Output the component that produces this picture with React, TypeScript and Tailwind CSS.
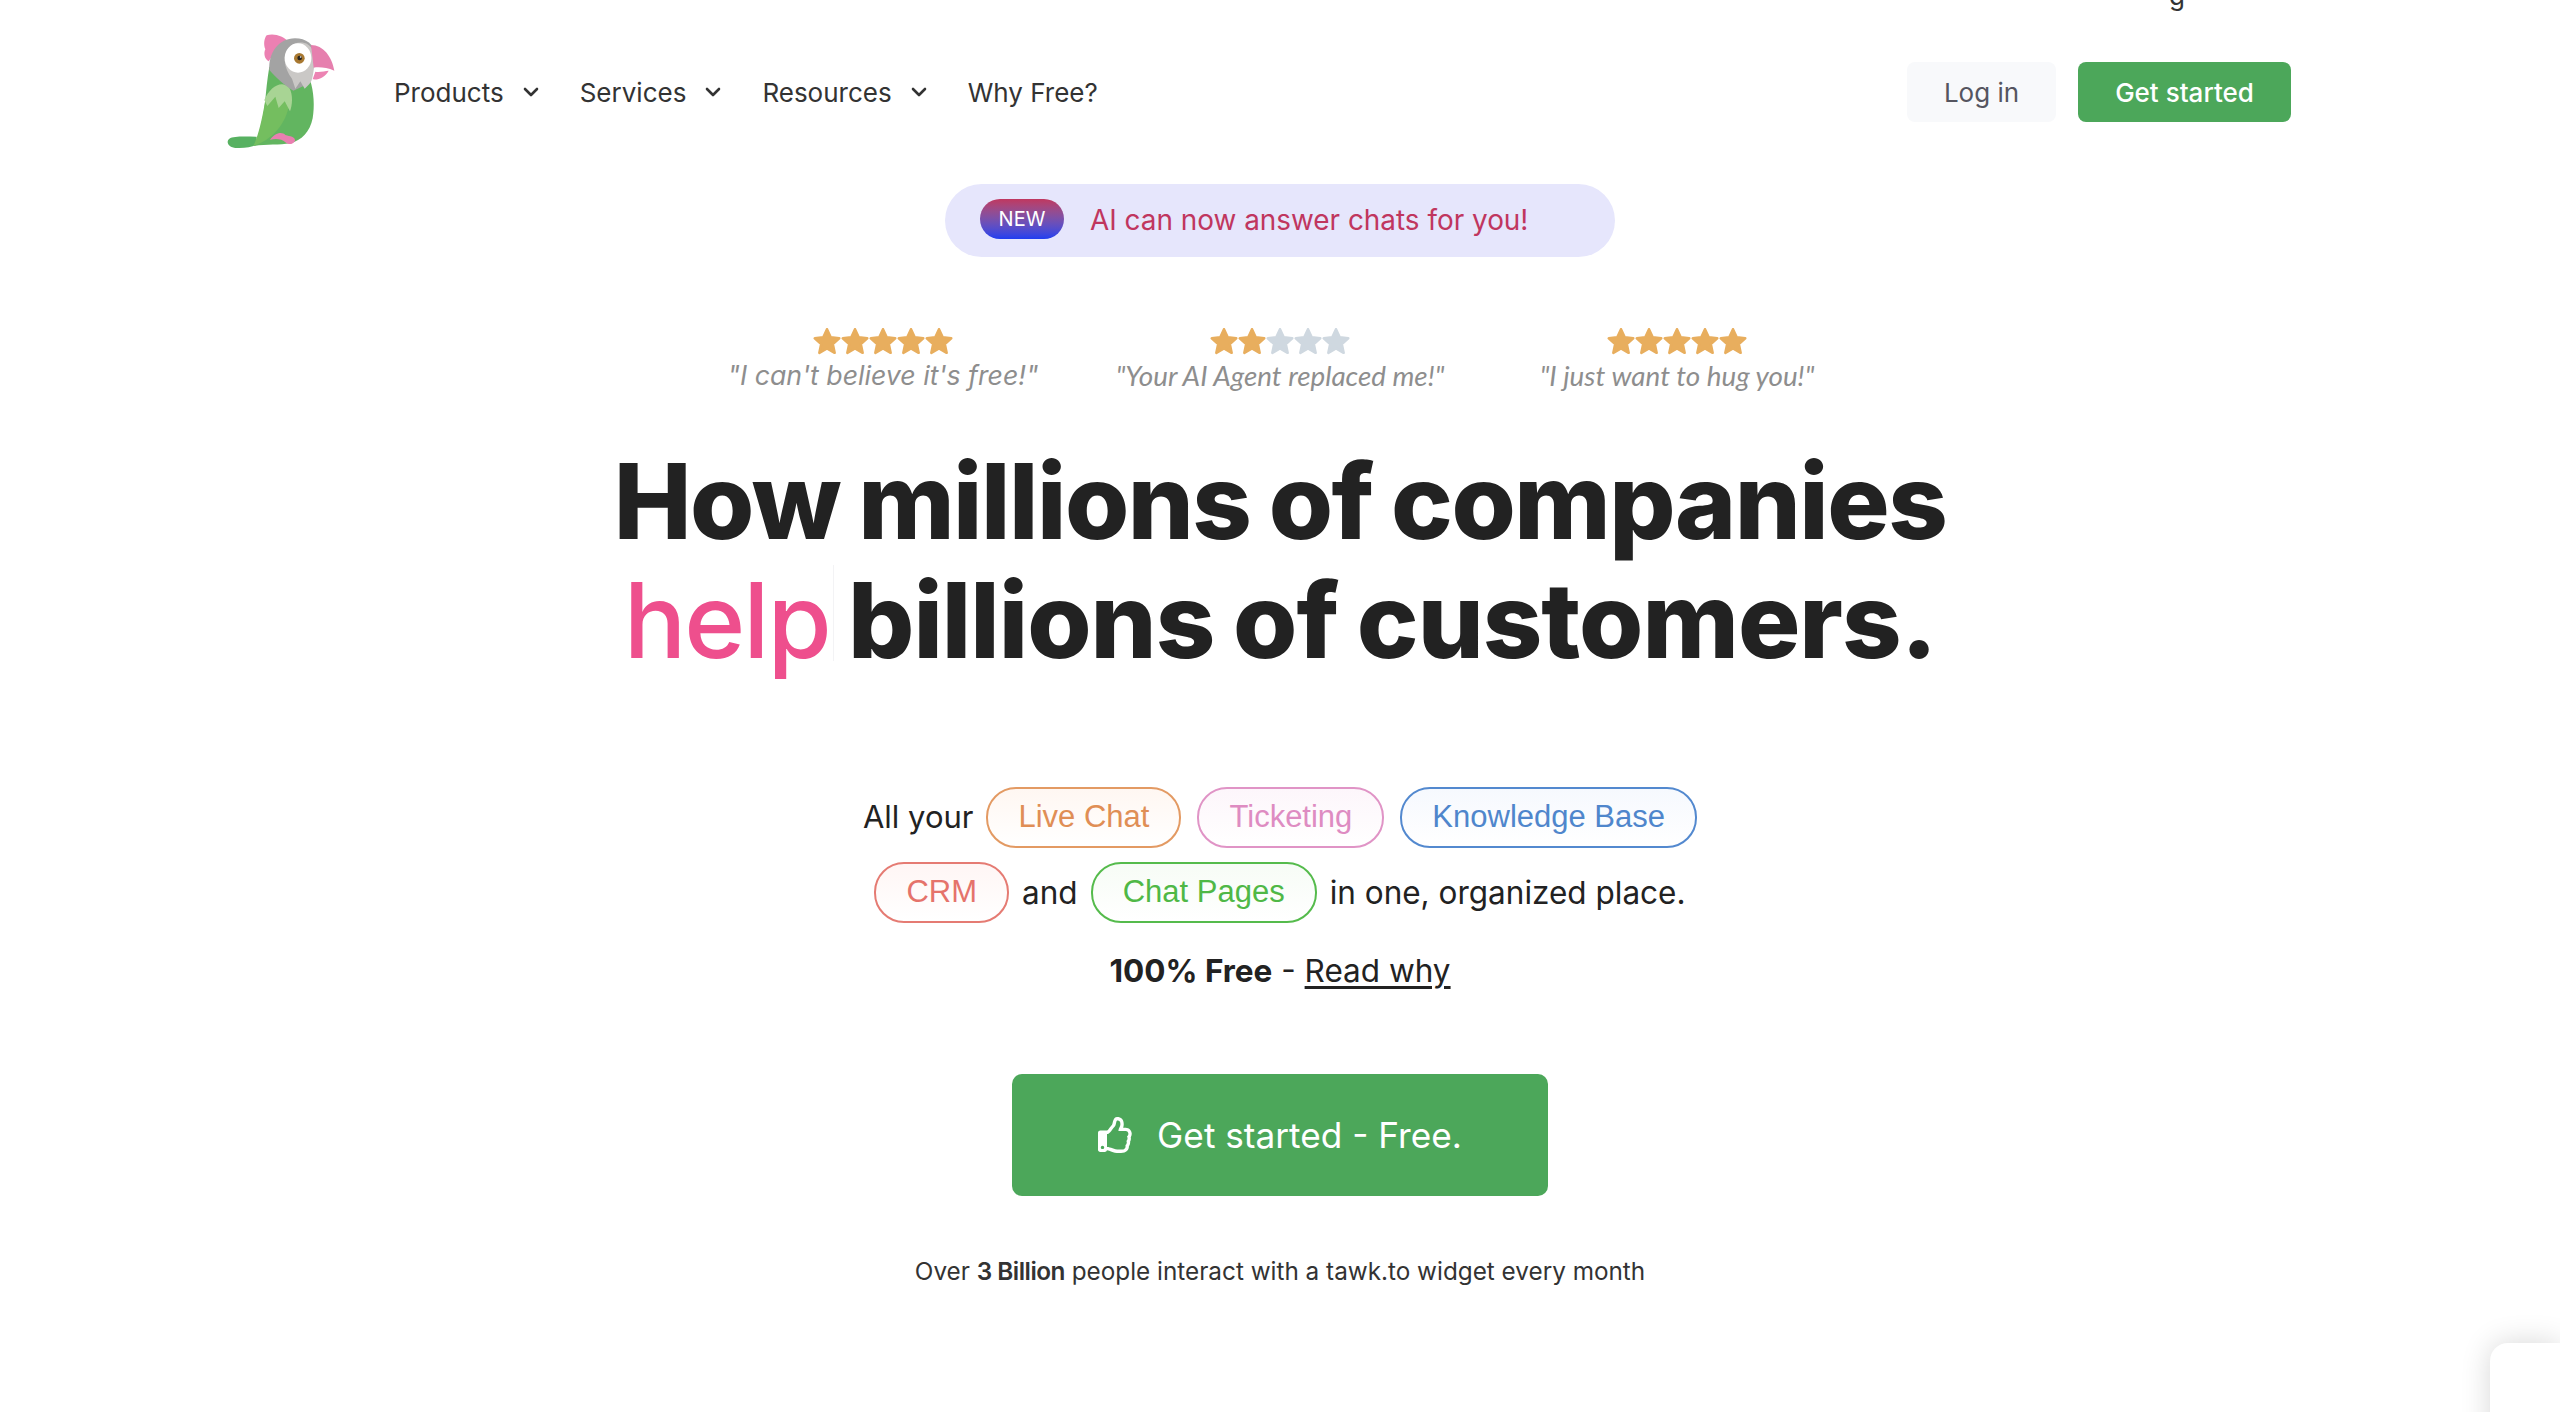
import { ChevronDown } from 'lucide-react';
import { FaRegThumbsUp } from 'react-icons/fa';

const navLinks = [
  { label: 'Products', menu: true },
  { label: 'Services', menu: true },
  { label: 'Resources', menu: true },
  { label: 'Why Free?', menu: false },
];

const reviews = [
  { quote: `"I can't believe it's free!"`, stars: 5, font: "font-['Inter',sans-serif] text-[26.7px] mt-px" },
  { quote: `"Your AI Agent replaced me!"`, stars: 2, font: "font-['Lato',sans-serif] text-[27.8px] mt-0.5" },
  { quote: `"I just want to hug you!"`, stars: 5, font: "font-['Lato',sans-serif] text-[27.8px] mt-0.5" },
];

function Parrot() {
  return (
    <svg viewBox="0 0 390 420" className="w-[130px] h-[140px] shrink-0">
      {/* crest */}
      <path d="M170 46C190 38 222 48 234 64L200 90L176 124C164 118 160 100 166 88C160 74 162 56 170 46Z" fill="#EC80B2" />
      {/* tail */}
      <path d="M140 350C110 350 72 347 58 356C46 366 56 384 82 384C106 385 126 380 140 374Z" fill="#57B161" />
      {/* body */}
      <path d="M178 140L300 180C312 215 314 260 308 295C300 335 275 362 240 370C210 376 170 372 132 378C150 340 160 290 165 250C168 215 172 175 178 140Z" fill="#62B560" />
      <path d="M165 245C156 300 144 350 130 378C180 362 222 322 236 262L210 225Z" fill="#74BE5F" />
      <path d="M163 240C180 200 216 178 238 204C250 224 247 258 240 274L224 244L206 264L196 230L172 258Z" fill="#A8D494" />
      {/* head */}
      <path d="M178 150C174 100 206 55 255 55C288 55 312 72 318 108L298 190L250 212C222 195 195 170 178 150Z" fill="#A3A3A3" />
      <path d="M224 122C222 86 250 64 280 68C306 72 318 100 313 136C309 168 306 188 296 194L284 206L271 184L256 206L246 176C234 160 226 142 224 122Z" fill="#CAC8C6" />
      <ellipse cx="264" cy="114" rx="40" ry="44" fill="#FFFFFF" />
      <circle cx="268" cy="115" r="16" fill="#A87830" />
      <circle cx="269" cy="114" r="7" fill="#26231F" />
      <circle cx="272" cy="111" r="2.5" fill="#FFFFFF" />
      {/* beak */}
      <path d="M303 75C340 75 366 110 373 152C350 142 326 140 311 143Z" fill="#E67FAE" />
      <path d="M316 155C330 158 345 152 356 152C346 170 326 181 308 178Z" fill="#EC84B3" />
      {/* foot */}
      <path d="M180 360C194 338 216 334 226 345C240 349 256 350 255 362C250 373 236 375 228 368C215 356 195 355 180 360Z" fill="#E97FB0" />
    </svg>
  );
}

function Star({ on }: { on: boolean }) {
  return (
    <svg viewBox="1 1.5 22 22" className="w-7 h-7">
      <path
        d="M12 2.5l2.9 6.3 6.7.8-5 4.6 1.4 6.8-6-3.5-6 3.5 1.4-6.8-5-4.6 6.7-.8z"
        fill={on ? '#E8AE5E' : '#CFD8E0'}
        stroke={on ? '#E8AE5E' : '#CFD8E0'}
        strokeWidth="2"
        strokeLinejoin="round"
      />
    </svg>
  );
}

function Pill({ label, className }: { label: string; className: string }) {
  return (
    <span
      className={`inline-flex items-center h-[61px] px-[30px] rounded-[30px] border-2 bg-gradient-to-b to-white font-['Liberation_Sans',sans-serif] text-[31px] ${className}`}
    >
      {label}
    </span>
  );
}

export default function App() {
  return (
    <div className="relative w-full h-[1412px] overflow-hidden bg-white text-[#222222] font-['Inter',sans-serif]">
      <span className="absolute right-[375px] top-[-24px] text-[26px] text-[#333]">g</span>

      {/* Nav */}
      <header className="flex items-center pl-[210px] pr-[269px] pt-5">
        <Parrot />
        <nav className="flex items-center gap-[37px] ml-[54px] mt-1 text-[26px] text-[#333333]">
          {navLinks.map((link) => (
            <a key={link.label} className="flex items-center gap-[15px]">
              {link.label}
              {link.menu && <ChevronDown size={24} strokeWidth={2.6} />}
            </a>
          ))}
        </nav>
        <div className="flex items-center gap-[22px] ml-auto mt-1 text-[26px]">
          <button className="w-[149px] h-[60px] rounded-lg bg-[#F8F9FB] text-[#555560]">Log in</button>
          <button className="w-[213px] h-[60px] rounded-lg bg-[#4CA75A] text-white font-medium">Get started</button>
        </div>
      </header>

      {/* Hero */}
      <main className="flex flex-col items-center">
        <div className="flex items-center w-[670px] h-[73px] mt-6 pl-[35px] rounded-[37px] bg-[#E6E6FC]">
          <span className="flex items-center justify-center w-[84px] h-10 -mt-[3px] rounded-[20px] bg-gradient-to-b from-[#C0365F] to-[#1F3DF0] text-white text-[20px]">
            NEW
          </span>
          <span className="ml-[26px] text-[27.9px] text-[#C0365F]">AI can now answer chats for you!</span>
        </div>

        <div className="grid grid-cols-3 w-[1191px] mt-[71px]">
          {reviews.map((review) => (
            <div key={review.quote} className="flex flex-col items-center">
              <div className="flex">
                {[0, 1, 2, 3, 4].map((i) => (
                  <Star key={i} on={i < review.stars} />
                ))}
              </div>
              <p className={`italic leading-[36px] text-[#8E8E8E] ${review.font}`}>{review.quote}</p>
            </div>
          ))}
        </div>

        <h1 className="mt-[48px] text-center text-[104px] leading-[119px] font-extrabold tracking-[-1.5px] [word-spacing:-3px] text-[#222222]">
          How millions of companies
          <br />
          <span className="relative font-medium text-[#EE4F8D] tracking-[-2px]">
            help
            <span className="absolute right-[-4px] top-[8px] h-[96px] w-px bg-[#F3F3F5]" />
          </span>{' '}
          <span className="tracking-[-1px]">billions of customers.</span>
        </h1>

        <div className="flex flex-col items-center gap-[14px] mt-[107px] text-[31.5px] text-[#222222]">
          <div className="flex items-center gap-[13px]">
            <span className="text-[31px]">All your</span>
            <Pill label="Live Chat" className="from-[#FFF7F2] border-[#E39A63] text-[#E08E55]" />
            <Pill label="Ticketing" className="from-[#FDF6FB] border-[#E094C6] text-[#DE8CC2] ml-[3px]" />
            <Pill label="Knowledge Base" className="from-[#F6F9FE] border-[#5389CF] text-[#4F86CC] ml-[3px]" />
          </div>
          <div className="flex items-center gap-[13px]">
            <Pill label="CRM" className="from-[#FFF6F5] border-[#E57B73] text-[#E5736B]" />
            and
            <Pill label="Chat Pages" className="from-[#F7FCF6] border-[#55BB4C] text-[#4FB846]" />
            in one, organized place.
          </div>
        </div>

        <p className="mt-[28px] text-[31.5px] leading-10">
          <b className="font-bold">100% Free</b> - <a className="underline underline-offset-4">Read why</a>
        </p>

        <button className="flex items-center justify-center gap-[23px] w-[536px] h-[122px] mt-[83px] rounded-[10px] bg-[#4CA75A] text-white text-[35.2px]">
          <FaRegThumbsUp size={36} />
          Get started - Free.
        </button>

        <p className="mt-[57px] text-[24.3px] text-[#333333]">
          Over <b className="font-semibold tracking-[-0.5px]">3 Billion</b> people interact with a tawk.to widget every month
        </p>
      </main>

      {/* chat widget peeking in at the corner */}
      <div className="absolute right-0 top-[1343px] w-[70px] h-[120px] rounded-tl-[18px] bg-white shadow-[0_0_30px_rgba(0,0,0,0.16)]" />
    </div>
  );
}
